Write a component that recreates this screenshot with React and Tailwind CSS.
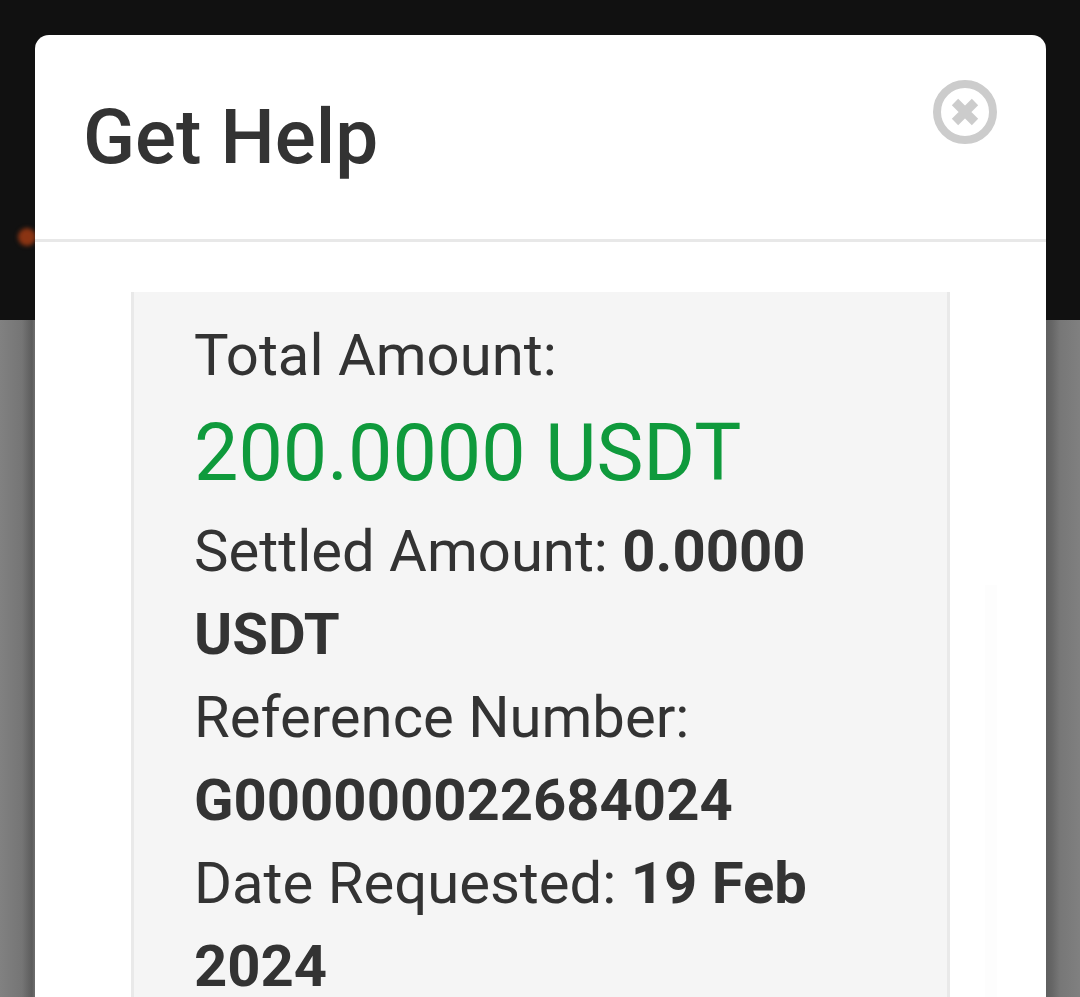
export default function App() {
  return (
    <div className="relative h-[997px] w-[1080px] overflow-hidden bg-[#7f7f7f] font-['Roboto',sans-serif]">
      <div className="relative h-[320px] bg-[#111111]">
        <div className="absolute left-[18px] top-[228px] h-[18px] w-[18px] rounded-full bg-[#8a3413] blur-[2px]" />
      </div>
      <div className="h-[677px] bg-[linear-gradient(90deg,#818181_0px,#757575_22px,#5c5c5c_32px,#6a6a6a_34px,#7f7f7f_40px,#7f7f7f_1040px,#5f5f5f_1046px,#666666_1052px,#777777_1060px,#808080_1080px)]" />
      <div className="absolute left-[35px] top-[35px] h-[1000px] w-[1011px] rounded-t-[14px] bg-white text-[#333333]">
        <div className="flex h-[207px] items-start justify-between border-b-[3px] border-[#e8e8e8] pl-[48px] pr-[49px]">
          <h1 className="mt-[57px] text-[76.5px] font-medium leading-[90px]">Get Help</h1>
          <svg className="mt-[45px]" width="64" height="64" viewBox="0 0 64 64" fill="none" stroke="#cccccc">
            <circle cx="32" cy="32" r="28" strokeWidth="8" />
            <path d="M22 22 L42 42 M42 22 L22 42" strokeWidth="9" />
          </svg>
        </div>
        <div className="absolute left-[950px] top-[550px] h-[450px] w-[12px] bg-[#fdfdfd]" />
        <div className="mx-[96px] mt-[50px] border-x-[3px] border-[#e9e9e9] bg-[#f5f5f5] pl-[60px] pr-[60px] pt-[22px] text-[58px] leading-[83px]">
          <div>Total Amount:</div>
          <div className="mb-px text-[79px] leading-[112px] text-[#0f9a3c]">200.0000 USDT</div>
          <div>Settled Amount: <b className="font-bold">0.0000 USDT</b></div>
          <div>Reference Number: <b className="font-bold">G000000022684024</b></div>
          <div>Date Requested: <b className="font-bold">19 Feb 2024</b></div>
        </div>
      </div>
    </div>
  );
}
